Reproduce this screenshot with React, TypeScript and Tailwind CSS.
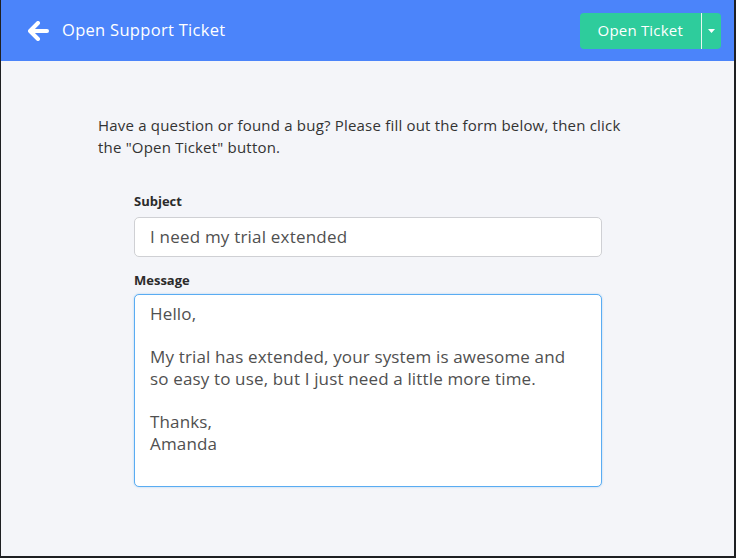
import React from "react";

export default function App() {
  const font = { fontFamily: '"Open Sans", "Noto Sans", Arial, sans-serif' };
  return (
    <div className="w-[736px] h-[558px] bg-[#1e1f22] pl-px pr-[2px] pb-[2px] overflow-hidden" style={font}>
      <div className="w-full h-full bg-[#f4f5f9] flex flex-col">
        <header className="h-[61px] bg-[#4b84fa] flex items-center justify-between pl-[27px] pr-[13px] shrink-0">
          <div className="flex items-center gap-[12px]">
            <svg width="22" height="20" viewBox="0 0 22 20" fill="none">
              <path d="M10 2 L2 10 L10 18" stroke="white" strokeWidth="4" strokeLinecap="round" strokeLinejoin="round" />
              <path d="M3 10 H19" stroke="white" strokeWidth="4" strokeLinecap="round" />
            </svg>
            <span className="text-white text-[16.5px] tracking-[0.3px]">Open Support Ticket</span>
          </div>
          <div className="flex h-[36px] rounded-[4px] bg-[#2ecc9c] overflow-hidden">
            <button className="px-[18px] text-white text-[15px] font-medium tracking-[0.2px] border-r border-[#e6f7f1]">
              Open Ticket
            </button>
            <button className="w-[19px] flex items-center justify-center">
              <svg width="7" height="4" viewBox="0 0 7 4"><path d="M0 0 H7 L3.5 4 Z" fill="white" /></svg>
            </button>
          </div>
        </header>
        <main className="flex flex-col pl-[97px] pt-[53px]">
          <p className="text-[15px] leading-[22px] font-medium text-[#333] w-[535px] tracking-[0.2px]">
            Have a question or found a bug? Please fill out the form below, then click the "Open Ticket" button.
          </p>
          <div className="ml-[36px] mt-[34px] w-[468px] flex flex-col">
            <label className="text-[13px] font-bold text-[#2b2b2b] leading-[18px]">Subject</label>
            <div className="mt-[7px] h-[40px] bg-white border border-[#cfd0d4] rounded-[5px] flex items-center pl-[15px] text-[17px] tracking-[0.2px] text-[#505050]">
              I need my trial extended
            </div>
            <label className="mt-[14px] text-[13px] font-bold text-[#2b2b2b] leading-[18px]">Message</label>
            <div className="mt-[5px] h-[193px] bg-white border border-[#5aacf2] rounded-[5px] pl-[15px] pt-[8px] pr-[20px] text-[17px] tracking-[0.15px] leading-[21.7px] text-[#505050] shadow-[0_0_2px_rgba(90,172,242,0.5)]">
              <div>Hello,</div>
              <div className="h-[21.7px]" />
              <div>My trial has extended, your system is awesome and so easy to use, but I just need a little more time.</div>
              <div className="h-[21.7px]" />
              <div>Thanks,</div>
              <div>Amanda</div>
            </div>
          </div>
        </main>
      </div>
    </div>
  );
}
